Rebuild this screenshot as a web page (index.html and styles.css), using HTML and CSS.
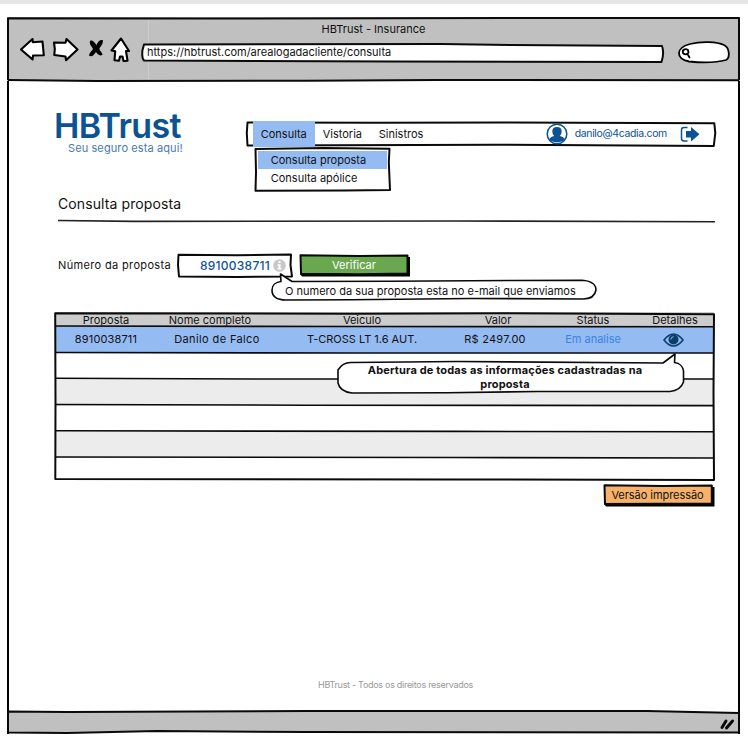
FILE: index.html
```html
<!DOCTYPE html>
<html lang="pt-BR">
<head>
<meta charset="utf-8">
<title>HBTrust - Insurance</title>
<link rel="stylesheet" href="styles.css">
</head>
<body>
<div class="strip"></div>
<div class="window">
  <header class="chrome">
    <svg class="frame" viewBox="0 0 733 64"><path d="M1 63 V1.3 L200 1.6 L500 1 L732 1 V63"/><path d="M1 63 L90 64 L300 63.8 L430 63 L732 63.2"/></svg>
    <div class="chrome-title"><span>HBTrust - Insurance</span></div>
    <div class="chrome-row">
      <svg class="tool" width="110" height="26" viewBox="0 0 110 26">
        <path class="ink" d="M1 12.5 L12.5 2 L12.8 5.2 L22.5 4.5 L23.8 18.3 L13 18.5 L12.6 22.5 Z"/>
        <path class="ink" d="M34 5.5 L45.5 5.8 L46.5 2 L57.5 12.5 L46 23.2 L45.5 19.5 L34.3 18 L34.8 12 Z"/>
        <path class="cross" d="M70 4 C72 2.500 74 4.500 76.500 8 C78 4 81 2 83 3.500 C83 7.500 80 10 79.300 11.700 C80 14.500 82.500 15.500 82.500 17.500 C80 20 77.500 17 76 15 C74 18 71.500 20.500 69 18.500 C69 16 72 14 73 12 C72 9 69 8 70 4 Z"/>
        <path class="ink" d="M101 1.500 L109 14 L106 14 L107.500 23.700 L103.500 24 L102.500 19.500 L100 19.500 L99 23.700 L94.500 23.200 L95.200 14.300 L91.500 13.500 Z"/>
      </svg>
      <div class="address">
        <svg class="frame" viewBox="0 0 523 20"><path class="paper" d="M3 1.500 L300 1 L370 2 L521 3 Q523.500 10 520.500 19 L250 18.500 L3 17.500 Q.5 15 1.500 7 Z"/></svg>
        <span>https://hbtrust.com/arealogadacliente/consulta</span>
      </div>
      <svg class="search" width="54" height="23" viewBox="0 0 54 23"><path class="ink thin" d="M13 3 C24 0 40 .5 47 4 C53 7 53 17 49 19 C38 22 22 21.500 12 20.500 C-1 18 -2 7 13 3 Z"/><path class="ink thin" d="M11 9 C8 7 5 9 6 12 C7 14 11 13.500 11.500 11.500 Z M10.500 13 L12.500 16.500"/></svg>
    </div>
  </header>

  <main class="page">
    <div class="top">
      <div class="brand"><div class="logo">HBTrust</div><div class="tagline">Seu seguro esta aqui!</div></div>
      <nav class="menu">
        <svg class="frame" viewBox="0 0 470 26"><path class="paper" d="M1.500 1.500 L130 1.800 L260 1.500 L469 2.200 L470 12 L468.500 25 L250 23.800 L1.500 24.500 L.8 12 Z"/></svg>
        <div class="tab active"><span>Consulta</span></div>
        <div class="tab vist"><span>Vistoria</span></div>
        <div class="tab sin"><span>Sinistros</span></div>
        <svg class="user" width="22" height="22" viewBox="0 0 22 22"><circle cx="11" cy="11" r="9.800"/><path d="M11 4 C8 4 6.300 5.600 6.300 8.200 C6.300 10.500 7.200 12 8.300 13 C5.700 13.500 3.800 14.500 3.300 16.500 C5.500 20 16.500 20 18.700 16.500 C18.200 14.500 16.300 13.500 13.700 13 C14.800 12 15.700 10.500 15.700 8.200 C15.700 5.600 14 4 11 4Z"/></svg>
        <span class="mail">danilo@4cadia.com</span>
        <svg class="exit" width="20" height="17" viewBox="0 0 20 17"><path class="door" d="M7.500 1.500 H4 Q1.500 1.500 1.500 4 V12.500 Q1.500 15 4 15 H7.500"/><path class="arrow" d="M6 5 H11 V1 L19.500 8.200 L11 15.600 V11.500 H6 Z"/></svg>
        <div class="dropdown">
          <svg class="frame" viewBox="0 0 137 45"><path class="paper" d="M1.500 2 L70 1 L135.500 1.800 L134.800 15 L136 43 L90 43.500 L1.500 43.800 L2 25 Z"/></svg>
          <div class="item on"><span>Consulta proposta</span></div>
          <div class="item"><span>Consulta apólice</span></div>
        </div>
      </nav>
    </div>

    <h1><span>Consulta proposta</span></h1>
    <svg class="rule" width="661" height="4" viewBox="0 0 661 4"><path d="M4 1.500 L80 2.400 L400 2 L661 2.800"/></svg>

    <div class="form">
      <label>Número da proposta</label>
      <div class="field">
        <svg class="frame" viewBox="0 0 116 25"><path class="paper" d="M1.500 1.800 L60 2.200 L114 1.500 L113.500 12 L115 23.500 L60 24 L2 23.500 L1 12 Z"/></svg>
        <span>8910038711</span>
        <svg class="info" width="13" height="13" viewBox="0 0 13 13"><circle cx="6.500" cy="6.500" r="6.300"/><path d="M5.500 2.300h2.100v1.800H5.500z M4.500 5.300h3.100v4h1v1.300H4.500V9.300h1V6.600h-1z"/></svg>
      </div>
      <div class="btn verify"><svg class="frame" viewBox="0 0 112 23"><path class="shade" d="M3 3 H111 V22.500 H3 L1 20 Z"/><path class="fill" d="M1.500 1.300 L60 2 L108.500 1.500 L108.500 19.500 L60 20.200 L2 19.800 Z"/></svg><span>Verificar</span></div>
      <div class="balloon hint">
        <svg class="frame" viewBox="0 0 326 28"><path class="paper thin" d="M15 27 C4 27 1 22 1 17 C1 12 5 9 10 8.500 L9.500 1 L21 8.500 L120 8.300 L240 7.500 L311 7.300 C322 8 325 13 325 17 C324 23 320 26 312 26 L200 25.500 L80 26.800 Z"/></svg>
        <span>O numero da sua proposta esta no e-mail que enviamos</span>
      </div>
    </div>

    <section class="table">
      <svg class="frame grid" viewBox="0 0 661 169"><path d="M1.200 1.200 L300 1.800 L450 1.200 L660 2.200 L659.500 80 L660 168 L400 167.500 L1.300 167 L1.500 90 Z"/><path class="thin" d="M1 14 L300 14.500 L660 14.800 M1 40.500 L300 41 L660 41 M1 66.300 L200 67 L660 67 M1 92.500 L250 93.200 L660 93.600 M1 118.800 L400 119.400 L660 119.800 M1 145 L400 145.500 L660 146"/></svg>
      <div class="row head"><span>Proposta</span><span class="c-nome">Nome completo</span><span>Veiculo</span><span>Valor</span><span>Status</span><span>Detalhes</span></div>
      <div class="row data"><span class="d-num">8910038711</span><span class="d-nome">Danilo de Falco</span><span class="d-car">T-CROSS LT 1.6 AUT.</span><span class="d-val">R$ 2497.00</span><span class="status">Em analise</span><span><svg class="eye" width="21" height="14" viewBox="0 0 21 14"><path d="M1 7 Q10.500 -5 20 7 Q10.500 19 1 7Z"/><circle cx="10.500" cy="6.500" r="5"/><path class="glint" d="M7.800 6.500 Q8 4 10.500 3.700"/></svg></span></div>
      <div class="row"></div>
      <div class="row alt"></div>
      <div class="row"></div>
      <div class="row alt"></div>
      <div class="row last"></div>
      <div class="balloon detail">
        <svg class="frame" viewBox="0 0 348 42"><path class="paper thin" d="M15 41 C7 40 2 36 1 31 L1 18 C4 13 9 10 15 10.500 L120 9.500 L326 11 L338 2 L337.500 10.500 C343 11 346 15 346.500 19 L346.500 30 C344 37 339 39 333 39.500 L200 39.500 L110 40.800 Z"/></svg>
        <p><span>Abertura de todas as informações cadastradas na</span><br><span>proposta</span></p>
      </div>
    </section>

    <div class="actions"><div class="btn print"><svg class="frame" viewBox="0 0 112 23"><path class="shade" d="M3 3 H111.500 V22.500 H3 L1 20 Z"/><path class="fill" d="M1.500 1.300 L60 2 L108.800 1.500 L108.800 19.500 L60 19.800 L2 20 Z"/></svg><span>Versão impressão</span></div></div>
    <footer><span>HBTrust - Todos os direitos reservados</span></footer>
  </main>

  <div class="statusbar">
    <svg class="frame" viewBox="0 0 733 24"><path class="bar" d="M1 1.500 L60 2 L300 1 L640 1 L732 3 V22.500 L300 22 L150 21 L60 23 L1 22.500 Z"/><path class="grip" d="M715 17.500 L719 11 M719.500 18 L725.500 11"/></svg>
  </div>
</div>
</body>
</html>
```
FILE: styles.css
```css
* { box-sizing: border-box; }
body { margin: 0; background: #fff; color: #111; font-family: Inter, "Noto Sans", sans-serif; font-size: 11px; line-height: 14px; width: 748px; height: 745px; overflow: hidden; }
span, label { white-space: nowrap; }
.strip { height: 4px; background: #e6e6e6; }
.window { width: 733px; height: 717px; margin: 13px 0 0 7px; display: flex; flex-direction: column; border-left: 2px solid #000; border-right: 2px solid #000; }
.frame { position: absolute; left: 0; top: 0; width: 100%; height: 100%; overflow: visible; fill: none; stroke: #0a0a0a; stroke-width: 2; stroke-linejoin: round; }
.frame .paper { fill: #fff; }
.frame .thin { stroke-width: 1.6; }

.chrome { position: relative; height: 64px; margin: 0 -2px; background: linear-gradient(#ccc, #ccc) 141px 0 / 1px 100% no-repeat #c0c0c0; }
.chrome-title { position: relative; padding-top: 5px; height: 20px; text-align: center; }
.chrome-row { position: relative; display: flex; align-items: flex-start; padding-left: 13px; }
.tool { flex: none; }
.ink { fill: #fff; stroke: #000; stroke-width: 2.1; stroke-linejoin: round; stroke-linecap: round; }
.cross { fill: #000; }
.ink.thin { stroke-width: 1.8; }
.address { position: relative; width: 523px; height: 20px; margin: 6px 0 0 11px; padding: 2px 0 0 6px; }
.address span { position: relative; }
.search { margin: 4px 0 0 13px; }

.page { flex: 1; padding: 0 23px 0 45px; display: flex; flex-direction: column; }
.top { display: flex; height: 111px; }
.brand { width: 192px; padding-top: 29px; color: #0b5394; }
.logo { font-size: 34px; line-height: 31px; font-weight: 600; letter-spacing: -.65px; }
.tagline { padding-left: 14px; color: #4a78b5; letter-spacing: .1px; }
.menu { position: relative; display: flex; width: 470px; height: 26px; margin-top: 40px; }
.menu > * { flex: none; }
.tab { position: relative; height: 26px; line-height: 26px; }
.active { margin-left: 7px; width: 62px; padding-left: 8px; background: #94bbf2; }
.vist { width: 56px; padding-left: 8px; }
.sin { width: 175px; padding-left: 8px; }
.user { position: relative; margin-top: 2px; fill: #0b5394; }
.user circle { fill: #fff; stroke: #0b5394; stroke-width: 1.5; }
.mail { position: relative; line-height: 25px; width: 112px; padding-left: 7px; color: #0b5394; font-size: 10.5px; letter-spacing: -.35px; }
.exit { position: relative; margin-top: 5px; }
.door { fill: none; stroke: #0b5394; stroke-width: 1.5; }
.arrow { fill: #0b5394; }
.dropdown { position: absolute; left: 8px; top: 26px; width: 137px; height: 45px; padding: 4px; }
.item { position: relative; height: 18px; line-height: 19px; padding-left: 13px; }
.item.on { background: #94bbf2; }
h1 { margin: 3px 0 0 4px; font-size: 14px; line-height: 18px; font-weight: 400; letter-spacing: .1px; }
.rule { margin: 6px 0 0; fill: none; stroke: #222; stroke-width: 1.6; }

.form { position: relative; display: flex; height: 89px; padding: 30px 0 0 4px; }
.form label { width: 119px; line-height: 25px; letter-spacing: .35px; }
.field { position: relative; display: flex; width: 116px; height: 25px; padding-left: 23px; line-height: 25px; color: #0b5394; font-size: 12px; font-weight: 500; letter-spacing: .25px; }
.field span { position: relative; width: 73px; }
.info { position: relative; margin-top: 6px; fill: #fff; }
.info circle { fill: #c8c8c8; }
.btn { position: relative; width: 112px; height: 23px; line-height: 22px; text-align: center; }
.btn span { position: relative; }
.btn .shade { fill: #000; stroke: none; }
.verify { margin: 1px 0 0 6px; padding-right: 2px; color: #fff; }
.verify .fill { fill: #6aa84f; }
.balloon { position: absolute; }
.balloon span { position: relative; }
.hint { left: 217px; top: 50px; width: 326px; height: 28px; padding: 11px 0 0 14px; }

.table { position: relative; width: 661px; height: 169px; }
.grid { z-index: 1; }
.row { display: grid; grid-template-columns: 102px 114px 182px 90px 100px 64px; height: 26.3px; margin: 0 1px; text-align: center; }
.row > span { position: relative; z-index: 2; }
.head { height: 14px; line-height: 16px; background: #ccc; }
.data { height: 27px; line-height: 26px; background: #94bbf2; }
.alt { background: #ececec; }
.last { height: 22px; }
.c-nome { padding-right: 8px; }
.d-num { letter-spacing: .15px; }
.d-nome { padding-left: 6px; letter-spacing: .38px; }
.d-val { letter-spacing: .25px; padding-right: 6px; }
.status { color: #3b82e6; }
.eye { margin: 7px 4px 0 0; fill: none; stroke: #0b3d6b; stroke-width: 1.6; }
.eye circle { fill: #0b3d6b; stroke: none; }
.eye .glint { stroke: #94bbf2; stroke-width: 1; }
.detail { z-index: 3; left: 283px; top: 40px; width: 348px; height: 42px; }
.detail p { position: relative; margin: 11px 0 0; padding-right: 12px; text-align: center; font-weight: 700; line-height: 14px; letter-spacing: .15px; }
.actions { display: flex; justify-content: flex-end; margin-top: 3px; width: 661px; }
.print { padding-right: 3px; letter-spacing: -.05px; line-height: 23px; }
.print .fill { fill: #f6b26b; }
footer { margin: 171px 0 0; width: 683px; text-align: center; font-size: 9px; letter-spacing: -.29px; color: #999; }
.statusbar { position: relative; height: 24px; margin: 0 -2px; }
.bar { fill: #c0c0c0; }
.grip { stroke-width: 3; stroke-linecap: round; }
```
